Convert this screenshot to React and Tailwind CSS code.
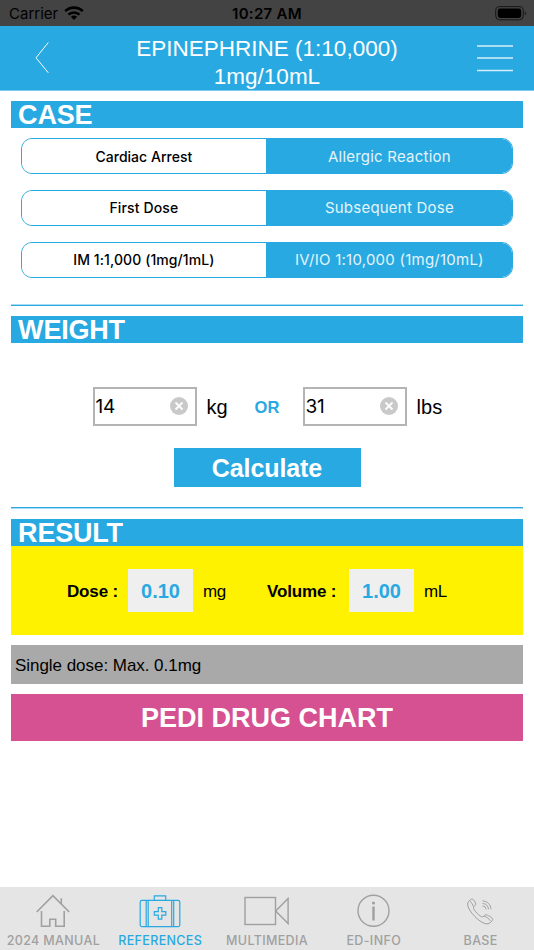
import clsx from 'clsx'

const CASE_OPTIONS = [
  { options: ['Cardiac Arrest', 'Allergic Reaction'], tracking: ['tracking-[0.03px]', 'tracking-[0.22px]'] },
  { options: ['First Dose', 'Subsequent Dose'], tracking: ['tracking-[0.12px]', 'tracking-[0.22px]'] },
  { options: ['IM 1:1,000 (1mg/1mL)', 'IV/IO 1:10,000 (1mg/10mL)'], tracking: ['tracking-[0.09px]', 'tracking-[0.24px]'] },
]

const TABS = [
  { label: '2024 MANUAL', icon: HomeIcon },
  { label: 'REFERENCES', icon: KitIcon, active: true },
  { label: 'MULTIMEDIA', icon: VideoIcon },
  { label: 'ED-INFO', icon: InfoIcon },
  { label: 'BASE', icon: PhoneIcon },
]

function HomeIcon() {
  return (
    <svg width="36" height="36" viewBox="0 0 36 36" fill="none" stroke="currentColor" strokeWidth="1.6">
      <path d="M1.700 19 17.900 2.700 34.200 19M26.300 11V5.300" />
      <path d="M6.500 18v15.300h8.300v-7.100h5.900v7.100h8.500V18" />
    </svg>
  )
}

function KitIcon() {
  return (
    <svg width="42" height="36" viewBox="0 0 42 36" fill="none" stroke="currentColor" strokeWidth="1.2">
      <rect x="1.200" y="7.300" width="39.600" height="26.400" rx="1.800" />
      <path d="M15.300 7V2.800h11.400V7M7.200 7.500V33.500M9.200 7.500V33.500M32.700 7.500V33.500M34.700 7.500V33.500" />
      <path d="M19.300 14.700h3.500v4h4v3.500h-4v4h-3.500v-4h-4v-3.500h4z" />
    </svg>
  )
}

function VideoIcon() {
  return (
    <svg width="46" height="36" viewBox="0 0 46 36" fill="none" stroke="currentColor" strokeWidth="1.4">
      <rect x="1" y="4.500" width="30.500" height="27" />
      <path d="M31.700 18 44.100 5.500v25z" />
    </svg>
  )
}

function InfoIcon() {
  return (
    <svg width="36" height="36" viewBox="0 0 36 36" fill="none" stroke="currentColor" strokeWidth="1.4">
      <circle cx="17.500" cy="17.800" r="15.500" />
      <path d="M17.500 13.500V27.500" strokeWidth="2.400" />
      <circle cx="17.500" cy="10" r="1.600" fill="currentColor" stroke="none" />
    </svg>
  )
}

function PhoneIcon() {
  return (
    <svg width="30" height="36" viewBox="0 0 30 36" fill="none" stroke="currentColor" strokeWidth="1" strokeLinejoin="round">
      <path d="M2.300 9C3.500 7.500 5 5.900 6.100 5.900c1.200 0 3.700 4 3.700 5.300 0 1.200-2.300 2-2.300 3.500 0 2.400 6.300 9.200 9 9.200 1.500 0 2-2.200 3.400-2.200 1.600 0 6.800 3.200 6.800 4.600 0 1.500-3 4.600-5.700 4.600C14.500 30.900 1.600 18 1.600 11c0-.8.200-1.400.7-2z" />
      <path d="M3.600 7.700c.9.500 3.700 4.500 3.900 5.900M17.700 23c2.300.5 5.700 3 6.700 4.900" />
      <path d="M16.500 8c4.500-.2 8.500 3.700 8.500 8.300M16.500 10.500c3.200-.1 5.900 2.600 6 5.800M16.500 13c2 0 3.500 1.500 3.500 3.300" />
    </svg>
  )
}

function StatusBar() {
  return (
    <div className="grid h-[26px] grid-cols-3 items-center bg-[#434343] pt-px text-black">
      <div className="flex items-center gap-[6px] pl-[9px]">
        <span className="text-[15px] leading-none">Carrier</span>
        <svg width="20" height="16" viewBox="0 0 20 16" fill="none" stroke="currentColor" strokeWidth="2.600">
          <path d="M1.200 5.200a12.500 12.500 0 0 1 17.600 0M4.500 8.700a7.800 7.800 0 0 1 11 0" />
          <path d="M10 14l-3.100-3.200a4.400 4.400 0 0 1 6.200 0z" fill="currentColor" stroke="none" />
        </svg>
      </div>
      <span className="text-center text-[15px] leading-none font-semibold tracking-[0.3px] whitespace-nowrap">10:27 AM</span>
      <div className="flex justify-end pr-[7px]">
        <svg width="32" height="16" viewBox="0 0 32 16">
          <rect x="0.700" y="0.600" width="27.600" height="13.200" rx="4" fill="none" stroke="#171717" strokeWidth="1" />
          <rect x="2.800" y="2.600" width="23.400" height="9.300" rx="2.300" />
          <path d="M29.800 5c2 .8 2 3.700 0 4.500z" fill="#222" />
        </svg>
      </div>
    </div>
  )
}

function Header() {
  return (
    <header className="flex h-[65px] items-start justify-between border-b border-[#7ccaec] bg-[#29a9e1] text-white">
      <button type="button" aria-label="Back" className="mt-[15px] ml-[34px] w-[68px]">
        <svg width="17" height="34" viewBox="0 0 17 34" fill="none" stroke="currentColor" strokeWidth="1">
          <path d="M14.300 1.500 2 16.800l12.300 15" />
        </svg>
      </button>
      <h1 className="pt-[9px] text-center font-['Liberation_Sans',sans-serif] text-[22.500px] leading-[28px]">
        EPINEPHRINE (1:10,000)
        <br />
        1mg/10mL
      </h1>
      <button type="button" aria-label="Menu" className="mt-[18px] mr-[21px] flex w-[81px] justify-end">
        <svg width="36" height="28" viewBox="0 0 36 28" stroke="#d7eef9" strokeWidth="1.500">
          <path d="M0 2h36M0 14h36M0 26.500h36" />
        </svg>
      </button>
    </header>
  )
}

function SectionTitle({ children, className }) {
  return (
    <h2
      className={clsx(
        "h-[27px] bg-[#29a9e1] pl-[7.500px] font-['Liberation_Sans',sans-serif] text-[27px] leading-[29px] font-bold tracking-[-0.2px] text-white",
        className,
      )}
    >
      {children}
    </h2>
  )
}

function Segmented({ options, tracking }) {
  return (
    <div className="grid h-[36px] grid-cols-[244px_1fr] overflow-hidden rounded-[11px] border-[1.500px] border-[#29a9e1]">
      <button type="button" className={clsx('bg-white text-[14px] font-medium text-black', tracking[0])}>
        {options[0]}
      </button>
      <button type="button" className={clsx('bg-[#29a9e1] pt-px pl-px text-[15px] text-[#e4f4fb]', tracking[1])}>
        {options[1]}
      </button>
    </div>
  )
}

function WeightInput({ value }) {
  return (
    <div className="flex h-[39px] w-[104px] items-center justify-between border-2 border-[#b4b4b4] pr-[7px] pl-px">
      <span className="pt-[2px] text-[19px] tracking-[-0.4px] text-black">{value}</span>
      <svg width="18" height="18" viewBox="0 0 18 18">
        <circle cx="9" cy="9" r="9" fill="#c9c9c9" />
        <path d="M5.500 5.500l7 7m0-7l-7 7" stroke="#fff" strokeWidth="1.800" />
      </svg>
    </div>
  )
}

function ResultValue({ children }) {
  return (
    <span className="flex h-[43px] w-[65px] items-center justify-center bg-[#efefef] pt-[2px] text-[20px] font-bold text-[#29a9e1]">
      {children}
    </span>
  )
}

export default function App() {
  return (
    <div className="flex h-[950px] w-[534px] flex-col overflow-hidden bg-white font-['Inter',sans-serif]">
      <StatusBar />
      <Header />
      <main className="flex flex-1 flex-col pt-[10px] pr-[10.600px] pl-[10.600px]">
        <SectionTitle>CASE</SectionTitle>
        <div className="mt-[10.400px] flex flex-col gap-[15.600px] pr-[10.500px] pl-[10.300px]">
          {CASE_OPTIONS.map((item) => (
            <Segmented key={item.options[0]} {...item} />
          ))}
        </div>

        <hr className="mt-[26.400px] h-[2px] border-0 border-t border-[#a9dcf3] bg-[#29a9e1]" />
        <SectionTitle className="mt-[10px]">WEIGHT</SectionTitle>
        <div className="mt-[44px] flex items-center pl-[82px] font-['Liberation_Sans',sans-serif] text-[20px]">
          <div className="font-['Inter',sans-serif]">
            <WeightInput value="14" />
          </div>
          <span className="w-[58px] pt-px pl-[10px]">kg</span>
          <span className="w-[38px] pt-px text-[16.500px] font-bold text-[#29a9e1]">OR</span>
          <div className="ml-[10px] font-['Inter',sans-serif]">
            <WeightInput value="31" />
          </div>
          <span className="pt-px pl-[10px]">lbs</span>
        </div>
        <button
          type="button"
          className="mt-[22px] h-[39px] w-[187px] self-center bg-[#29a9e1] pt-[2px] font-['Liberation_Sans',sans-serif] text-[25px] font-bold tracking-[-0.1px] text-white"
        >
          Calculate
        </button>

        <hr className="mt-[20px] h-[2px] border-0 border-b border-[#a9dcf3] bg-[#29a9e1]" />
        <SectionTitle className="mt-[10px]">RESULT</SectionTitle>
        <div className="flex h-[89px] items-center bg-[#fff200] font-['Liberation_Sans',sans-serif] text-[17px] text-black">
          <span className="w-[117.400px] pt-[2px] pl-[56.400px] font-bold tracking-[-0.15px] whitespace-nowrap">Dose :</span>
          <ResultValue>0.10</ResultValue>
          <span className="w-[74px] pt-[2px] pl-[10px] tracking-[-0.5px]">mg</span>
          <span className="w-[82px] pt-[2px] font-bold tracking-[-0.15px] whitespace-nowrap">Volume :</span>
          <ResultValue>1.00</ResultValue>
          <span className="pt-[2px] pl-[10px] tracking-[-0.3px]">mL</span>
        </div>
        <p className="mt-[10px] h-[39px] bg-[#a9a9a9] pl-[4.400px] font-['Liberation_Sans',sans-serif] text-[17px] leading-[41px] tracking-[-0.04px] text-black">
          Single dose: Max. 0.1mg
        </p>
        <button
          type="button"
          className="mt-[10px] h-[47px] bg-[#d55191] pt-[2px] font-['Liberation_Sans',sans-serif] text-[27px] font-bold text-white"
        >
          PEDI DRUG CHART
        </button>
      </main>
      <nav className="grid h-[63px] shrink-0 grid-cols-5 bg-[#e5e5e5]">
        {TABS.map(({ label, icon: Icon, active }) => (
          <a
            key={label}
            className={clsx('flex flex-col items-center pt-[6px]', active ? 'text-[#29a9e1]' : 'text-[#a0a0a0]')}
          >
            <Icon />
            <span className="mt-[4px] text-[12.500px] leading-[15px] font-medium tracking-[0.35px] whitespace-nowrap">{label}</span>
          </a>
        ))}
      </nav>
    </div>
  )
}
